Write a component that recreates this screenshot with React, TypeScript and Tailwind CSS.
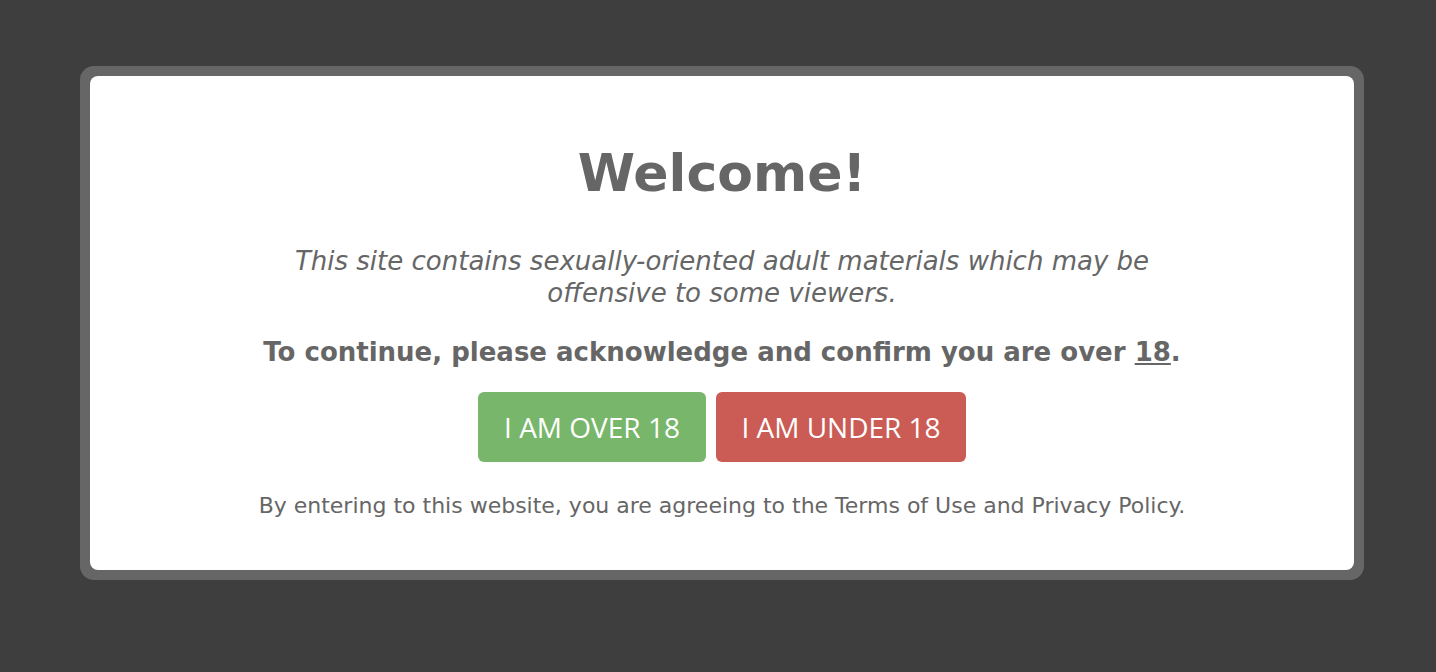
import React from "react";

export default function App() {
  return (
    <div className="min-h-[672px] w-full bg-[#3e3e3e] pt-[66px] pl-[80px]">
      <div className="w-[1284px] rounded-[14px] bg-[#666666] p-[10px]">
        <div
          className="flex h-[494px] flex-col items-center rounded-[8px] bg-white pt-[62px] text-center text-[#666666]"
          style={{ fontFamily: '"DejaVu Sans", Verdana, sans-serif' }}
        >
          <h1 className="text-[52px] font-bold leading-[70px]">Welcome!</h1>
          <p className="mt-[37px] w-[900px] text-[26px] italic leading-[32px]">
            This site contains sexually-oriented adult materials which may be
            offensive to some viewers.
          </p>
          <p className="mt-[27px] text-[26px] font-bold leading-[32px]">
            To continue, please acknowledge and confirm you are over{" "}
            <span className="underline">18</span>.
          </p>
          <div
            className="mt-[24px] flex gap-[10px]"
            style={{ fontFamily: '"Open Sans", Inter, sans-serif' }}
          >
            <button className="h-[70px] w-[228px] rounded-[6px] bg-[#77b66b] text-[28px] text-white">
              I AM OVER 18
            </button>
            <button className="h-[70px] w-[250px] rounded-[6px] bg-[#cb5c55] text-[28px] text-white">
              I AM UNDER 18
            </button>
          </div>
          <p className="mt-[29px] text-[22px] leading-[30px]">
            By entering to this website, you are agreeing to the Terms of Use
            and Privacy Policy.
          </p>
        </div>
      </div>
    </div>
  );
}
